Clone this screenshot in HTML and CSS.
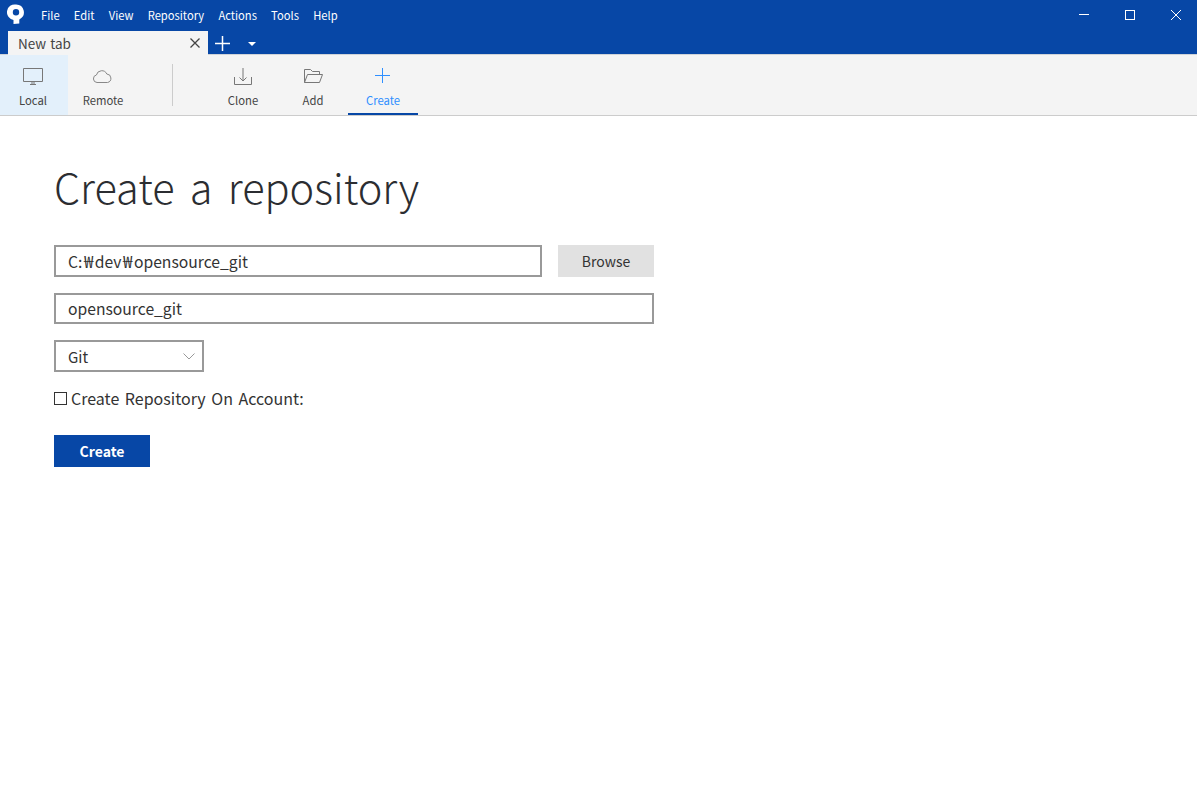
FILE: index.html
```html
<!DOCTYPE html>
<html lang="en">
<head>
<meta charset="utf-8">
<title>Create a repository</title>
<link rel="stylesheet" href="styles.css">
</head>
<body>
<header class="chrome">
  <div class="titlebar">
    <svg class="logo" width="18" height="22" viewBox="0 0 18 22"><path fill="#fff" fill-rule="evenodd" d="M9 1.500a7.800 7.800 0 0 1 3.300 14.900V20.500L6.500 21V16.900A7.800 7.800 0 0 1 9 1.500Zm0 4.600a3.200 3.200 0 1 0 0 6.400 3.200 3.200 0 0 0 0-6.400Z"/></svg>
    <nav class="menu">
      <span>File</span><span>Edit</span><span>View</span><span>Repository</span><span>Actions</span><span>Tools</span><span>Help</span>
    </nav>
    <div class="winbtns">
      <svg width="10" height="10" viewBox="0 0 10 10"><path d="M0 4.500h10" stroke="#fff"/></svg>
      <svg width="10" height="10" viewBox="0 0 10 10"><rect x=".5" y=".5" width="9" height="9" fill="none" stroke="#fff"/></svg>
      <svg width="10" height="10" viewBox="0 0 10 10"><path d="M0 0l10 10M10 0L0 10" stroke="#fff"/></svg>
    </div>
  </div>
  <div class="tabrow">
    <div class="tab">
      <span class="tab-label">New tab</span>
      <svg width="10" height="10" viewBox="0 0 10 10"><path d="M.5.500l9 9M9.500.5l-9 9" stroke="#444" stroke-width="1.300"/></svg>
    </div>
    <svg class="plus" width="15" height="15" viewBox="0 0 15 15"><path d="M7.500 0v15M0 7.500h15" stroke="#fff" stroke-width="1.500"/></svg>
    <svg class="caret" width="8" height="4" viewBox="0 0 8 4"><path d="M0 0h8L4 4Z" fill="#fff"/></svg>
  </div>
</header>
<div class="toolbar">
  <div class="tool tool-active">
    <svg width="22" height="20" viewBox="0 0 22 20"><path d="M1.500 1.500h19v13h-19zM8 17.500h6M10 15v2M12 15v2" fill="none" stroke="#777"/></svg>
    <span>Local</span>
  </div>
  <div class="tool">
    <svg width="22" height="20" viewBox="0 0 22 20"><path d="M5 15.500a3.800 3.800 0 0 1-.6-7.500 5.500 5.500 0 0 1 10.400-1 4.300 4.300 0 0 1 .7 8.500Z" fill="none" stroke="#888"/></svg>
    <span>Remote</span>
  </div>
  <div class="divider"></div>
  <div class="tool">
    <svg width="22" height="20" viewBox="0 0 22 20"><path d="M2.500 10v7.500h17V10M11 1v13M7.500 10.500 11 14l3.500-3.500" fill="none" stroke="#777"/></svg>
    <span>Clone</span>
  </div>
  <div class="tool">
    <svg width="22" height="20" viewBox="0 0 22 20"><path d="M2.500 15.500v-13h6l2 2h7v3M2.500 15.500l3-8h15l-3 8Z" fill="none" stroke="#777"/></svg>
    <span>Add</span>
  </div>
  <div class="tool tool-current">
    <svg width="22" height="20" viewBox="0 0 22 20"><path d="M10.500 1v15M3 8.500h15" fill="none" stroke="#2f8fff"/></svg>
    <span>Create</span>
  </div>
</div>
<main class="content">
  <h1 class="heading">Create a repository</h1>
  <div class="row">
    <div class="field field-path"><span>C:<span class="won">₩</span>dev<span class="won">₩</span>opensource_git</span></div>
    <button class="btn-browse">Browse</button>
  </div>
  <div class="field field-name">opensource_git</div>
  <div class="field field-select">
    <span>Git</span>
    <svg width="12" height="7" viewBox="0 0 12 7"><path d="M.5.500 6 6 11.500.5" fill="none" stroke="#999"/></svg>
  </div>
  <label class="check"><span class="box"></span><span>Create Repository On Account:</span></label>
  <button class="btn-create">Create</button>
</main>
</body>
</html>
```
FILE: styles.css
```css
* { box-sizing: border-box; }
html, body { margin: 0; height: 100%; }
body {
  background: #fff;
  color: #333;
  font-family: "Noto Sans CJK KR", "Noto Sans", sans-serif;
  font-size: 15.700px;
  overflow: hidden;
}
.chrome { background: #0747a6; height: 54px; }
.titlebar { display: flex; align-items: center; height: 31px; padding-left: 7px; }
.logo { flex: none; margin-top: -3px; }
.menu { display: flex; gap: 14.200px; margin-left: 16px; color: #fff; font-size: 11.200px; line-height: 28px; margin-bottom: 1px; }
.winbtns { display: flex; margin-left: auto; gap: 36px; padding-right: 16px; }
.winbtns svg { display: block; margin-top: -1px; }
.tabrow { display: flex; align-items: flex-start; height: 23px; padding-left: 8px; }
.tab {
  position: relative; z-index: 1;
  display: flex; align-items: center; justify-content: space-between;
  flex: none; width: 200px; height: 24px; padding: 0 8px 1px 10px;
  background: #f4f4f4; color: #444; font-size: 13.500px;
}
.tab-label { word-spacing: 1px; }
.plus { margin: 5px 0 0 7px; }
.caret { margin: 11px 0 0 18px; }
.toolbar {
  display: flex; height: 62px;
  background: #f4f4f4; border-bottom: 1px solid #ccc;
  border-top: 1px solid #cfd3d8;
}
.tool {
  display: flex; flex-direction: column; align-items: center;
  width: 70px; padding-top: 12px; color: #444; font-size: 11.300px; line-height: 16px;
}
.tool svg { display: block; margin-bottom: 5px; }
.tool:first-child { width: 68px; padding-right: 2px; }
.tool-active { background: #e3f0fb; }
.tool-current { color: #2f8fff; border-bottom: 2px solid #0747a6; height: 60px; }
.divider { width: 1px; height: 42px; margin: 9px 35px 0 34px; background: #ccc; }
.content { padding: 40px 0 0 54px; }
.heading { margin: 0 0 29px; font-size: 41.500px; font-weight: 300; line-height: 60px; color: #2b2d31; word-spacing: 6px; }
.row { display: flex; gap: 16px; width: 600px; margin-bottom: 16px; }
.field {
  display: flex; align-items: center; height: 32px;
  padding: 0 12px; border: 2px solid #999; color: #333; background: #fff;
}
.won { font-size: 17px; line-height: 0; margin: 0 1.500px; }
.field-path { width: 488px; }
.field-name { width: 600px; height: 31px; margin-bottom: 16px; }
.field-select { width: 150px; justify-content: space-between; padding-right: 7px; font-size: 15px; }
.btn-browse {
  width: 96px; height: 32px; border: 0; background: #e1e1e1; color: #333;
  font: inherit; font-size: 14px; padding: 0;
}
.check { display: flex; align-items: center; gap: 4px; margin-top: 16px; height: 20px; font-size: 16px; word-spacing: 2px; }
.box { width: 13px; height: 13px; border: 1px solid #333; background: #fff; }
.btn-create {
  display: block; width: 96px; height: 32px; margin-top: 27px; padding: 0;
  border: 0; background: #0747a6; color: #fff; font: inherit; font-size: 14px; font-weight: 700;
}
```
